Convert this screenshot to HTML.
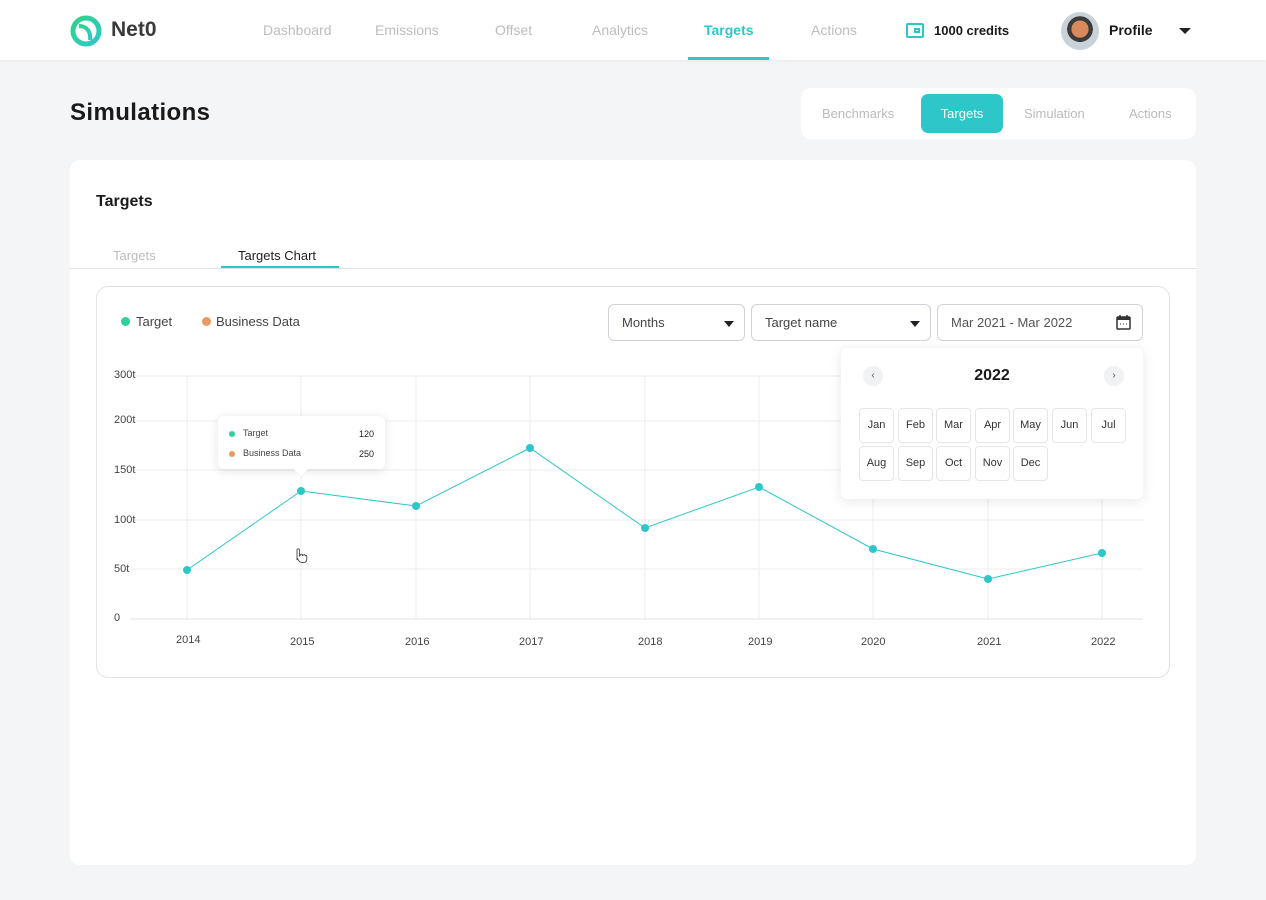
<!DOCTYPE html>
<html><head><meta charset="utf-8"><style>
*{box-sizing:border-box;margin:0;padding:0}
body{width:1266px;height:900px;background:#f4f5f7;font-family:"Liberation Sans",sans-serif;position:relative;overflow:hidden;color:#1a1a1a}
.a{position:absolute}
.nav{left:0;top:0;width:1266px;height:60px;background:#fff;box-shadow:0 1px 3px rgba(0,0,0,.06)}
.ni{top:22px;font-size:14px;color:#bdbdbd}
.card{background:#fff;border-radius:10px}
.dd{top:304px;height:37px;border:1px solid #cfd2d6;border-radius:6px;background:#fff;font-size:13px;color:#444;padding:10px 13px}
.tri{position:absolute;right:10px;top:16px;width:0;height:0;border-left:5px solid transparent;border-right:5px solid transparent;border-top:6px solid #222}
.m{position:absolute;width:35px;height:35px;border:1px solid #e6e6e6;border-radius:4px;font-size:11px;color:#333;text-align:center;line-height:33px}
.yl{left:114px;font-size:11px;color:#444}
.xl{top:636px;font-size:11px;color:#444}
</style></head><body>
<div class="a nav"></div>
<svg class="a" style="left:69px;top:14px" width="34" height="34" viewBox="0 0 34 34"><defs><linearGradient id="g" x1="0" y1="0" x2="1" y2="1"><stop offset="0" stop-color="#2fd48a"/><stop offset="1" stop-color="#2ec7c9"/></linearGradient></defs><circle cx="17" cy="17" r="13" fill="none" stroke="url(#g)" stroke-width="5"/><path d="M10 12 C18 12 22 18 21 26" fill="none" stroke="url(#g)" stroke-width="4"/></svg>
<div class="a" style="left:111px;top:18px;font-size:21px;font-weight:bold;color:#3a3a3a">Net0</div>
<div class="a ni" style="left:263px">Dashboard</div>
<div class="a ni" style="left:375px">Emissions</div>
<div class="a ni" style="left:495px">Offset</div>
<div class="a ni" style="left:592px">Analytics</div>
<div class="a ni" style="left:704px;color:#2ec7c9;font-weight:bold">Targets</div>
<div class="a" style="left:688px;top:57px;width:81px;height:3px;background:#2ec7c9"></div>
<div class="a ni" style="left:811px">Actions</div>
<div class="a" style="left:906px;top:23px;width:18px;height:15px;border:2px solid #2ec7c9;border-radius:2px"><div style="position:absolute;right:2px;top:3px;width:6px;height:5px;border:2px solid #2ec7c9"></div></div>
<div class="a" style="left:934px;top:23px;font-size:13px;font-weight:bold">1000 credits</div>
<div class="a" style="left:1061px;top:12px;width:38px;height:38px;border-radius:50%;background:radial-gradient(circle at 50% 45%,#d9895a 0 30%,#3b3b3b 31% 45%,#c9d2d8 46%)"></div>
<div class="a" style="left:1109px;top:22px;font-size:14px;font-weight:bold">Profile</div>
<div class="a" style="left:1179px;top:28px;border-left:6px solid transparent;border-right:6px solid transparent;border-top:6px solid #222"></div>

<div class="a" style="left:70px;top:99px;font-size:24px;font-weight:bold;letter-spacing:.4px">Simulations</div>
<div class="a card" style="left:801px;top:88px;width:395px;height:51px"></div>
<div class="a" style="left:822px;top:106px;font-size:13px;color:#bbb">Benchmarks</div>
<div class="a" style="left:921px;top:94px;width:82px;height:39px;background:#2ec7c9;border-radius:7px;color:#fff;font-size:13px;text-align:center;line-height:39px">Targets</div>
<div class="a" style="left:1024px;top:106px;font-size:13px;color:#bbb">Simulation</div>
<div class="a" style="left:1129px;top:106px;font-size:13px;color:#bbb">Actions</div>

<div class="a card" style="left:70px;top:160px;width:1126px;height:705px"></div>
<div class="a" style="left:96px;top:193px;font-size:16px;font-weight:bold">Targets</div>
<div class="a" style="left:113px;top:248px;font-size:13px;color:#bbb">Targets</div>
<div class="a" style="left:238px;top:248px;font-size:13px;color:#222">Targets Chart</div>
<div class="a" style="left:70px;top:268px;width:1126px;height:1px;background:#e3e3e3"></div>
<div class="a" style="left:221px;top:266px;width:118px;height:2px;background:#2ec7c9"></div>

<div class="a" style="left:96px;top:286px;width:1074px;height:392px;border:1px solid #e3e3e3;border-radius:12px"></div>
<div class="a" style="left:121px;top:317px;width:9px;height:9px;border-radius:50%;background:#2fd0a0"></div>
<div class="a" style="left:136px;top:314px;font-size:13px;color:#444">Target</div>
<div class="a" style="left:202px;top:317px;width:9px;height:9px;border-radius:50%;background:#e99a62"></div>
<div class="a" style="left:216px;top:314px;font-size:13px;color:#444">Business Data</div>
<div class="a dd" style="left:608px;width:137px">Months<div class="tri"></div></div>
<div class="a dd" style="left:751px;width:180px">Target name<div class="tri"></div></div>
<div class="a dd" style="left:937px;width:206px;color:#555">Mar 2021 - Mar 2022
<svg style="position:absolute;right:11px;top:10px" width="15" height="15" viewBox="0 0 15 15"><rect x="1" y="2" width="13" height="12" rx="1" fill="none" stroke="#333" stroke-width="1.5"/><rect x="1" y="2" width="13" height="3" fill="#333"/><path d="M4 0v3M11 0v3" stroke="#333" stroke-width="1.5"/><path d="M4 9h1M7 9h1M10 9h1" stroke="#333"/></svg></div>

<svg class="a" style="left:0;top:0" width="1266" height="900">
<g stroke="#eeeeee" stroke-width="1">
<line x1="130" y1="376" x2="1143" y2="376"/><line x1="130" y1="421" x2="1143" y2="421"/><line x1="130" y1="470" x2="1143" y2="470"/><line x1="130" y1="520" x2="1143" y2="520"/><line x1="130" y1="569" x2="1143" y2="569"/>
<line x1="187" y1="376" x2="187" y2="619"/><line x1="301" y1="376" x2="301" y2="619"/><line x1="416" y1="376" x2="416" y2="619"/><line x1="530" y1="376" x2="530" y2="619"/><line x1="645" y1="376" x2="645" y2="619"/><line x1="759" y1="376" x2="759" y2="619"/><line x1="873" y1="376" x2="873" y2="619"/><line x1="988" y1="376" x2="988" y2="619"/><line x1="1102" y1="376" x2="1102" y2="619"/>
</g>
<line x1="130" y1="619" x2="1143" y2="619" stroke="#e0e0e0"/>
<polyline points="187,570 301,491 416,506 530,448 645,528 759,487 873,549 988,579 1102,553" fill="none" stroke="#2ec7c9" stroke-width="1"/>
<g fill="#2ec7c9"><circle cx="187" cy="570" r="4"/><circle cx="301" cy="491" r="4"/><circle cx="416" cy="506" r="4"/><circle cx="530" cy="448" r="4"/><circle cx="645" cy="528" r="4"/><circle cx="759" cy="487" r="4"/><circle cx="873" cy="549" r="4"/><circle cx="988" cy="579" r="4"/><circle cx="1102" cy="553" r="4"/></g>
<path d="M297 560v-10a1.2 1.2 0 0 1 2.4 0v6l1-1a1 1 0 0 1 2 0.5l1-0.5a1 1 0 0 1 1.8 0.6 1 1 0 0 1 1.6 0.8v2.5c0 2-1 3.5-3 3.5h-2.5c-1.2 0-2-1-2.8-2l-1.5-2.5" fill="#fff" stroke="#444" stroke-width="0.9"/>
</svg>
<div class="a yl" style="top:369px">300t</div><div class="a yl" style="top:414px">200t</div><div class="a yl" style="top:464px">150t</div><div class="a yl" style="top:514px">100t</div><div class="a yl" style="top:563px">50t</div><div class="a yl" style="top:612px">0</div>
<div class="a xl" style="left:176px;top:634px">2014</div><div class="a xl" style="left:290px">2015</div><div class="a xl" style="left:405px">2016</div><div class="a xl" style="left:519px">2017</div><div class="a xl" style="left:638px">2018</div><div class="a xl" style="left:748px">2019</div><div class="a xl" style="left:861px">2020</div><div class="a xl" style="left:977px">2021</div><div class="a xl" style="left:1091px">2022</div>

<div class="a" style="left:218px;top:416px;width:167px;height:53px;background:#fff;border-radius:6px;box-shadow:0 2px 10px rgba(0,0,0,.12)"></div>
<div class="a" style="left:296px;top:464px;width:10px;height:10px;background:#fff;transform:rotate(45deg)"></div>
<div class="a" style="left:229px;top:431px;width:6px;height:6px;border-radius:50%;background:#2fd0a0"></div>
<div class="a" style="left:243px;top:428px;font-size:9px;color:#444">Target</div>
<div class="a" style="left:359px;top:429px;font-size:9px;color:#222">120</div>
<div class="a" style="left:229px;top:451px;width:6px;height:6px;border-radius:50%;background:#e99a62"></div>
<div class="a" style="left:243px;top:448px;font-size:9px;color:#444">Business Data</div>
<div class="a" style="left:359px;top:449px;font-size:9px;color:#222">250</div>

<div class="a" style="left:841px;top:348px;width:302px;height:151px;background:#fff;border-radius:6px;box-shadow:0 2px 12px rgba(0,0,0,.1)">
<div style="position:absolute;left:22px;top:18px;width:20px;height:20px;border-radius:50%;background:#f1f2f3;font-size:10px;text-align:center;line-height:20px;color:#555">‹</div>
<div style="position:absolute;left:0;width:302px;top:19px;text-align:center;font-size:16px;font-weight:bold">2022</div>
<div style="position:absolute;left:263px;top:18px;width:20px;height:20px;border-radius:50%;background:#f1f2f3;font-size:10px;text-align:center;line-height:20px;color:#555">›</div>
<div class="m" style="left:18px;top:60px">Jan</div><div class="m" style="left:57px;top:60px">Feb</div><div class="m" style="left:95px;top:60px">Mar</div><div class="m" style="left:134px;top:60px">Apr</div><div class="m" style="left:172px;top:60px">May</div><div class="m" style="left:211px;top:60px">Jun</div><div class="m" style="left:250px;top:60px">Jul</div>
<div class="m" style="left:18px;top:98px">Aug</div><div class="m" style="left:57px;top:98px">Sep</div><div class="m" style="left:95px;top:98px">Oct</div><div class="m" style="left:134px;top:98px">Nov</div><div class="m" style="left:172px;top:98px">Dec</div>
</div>
</body></html>
